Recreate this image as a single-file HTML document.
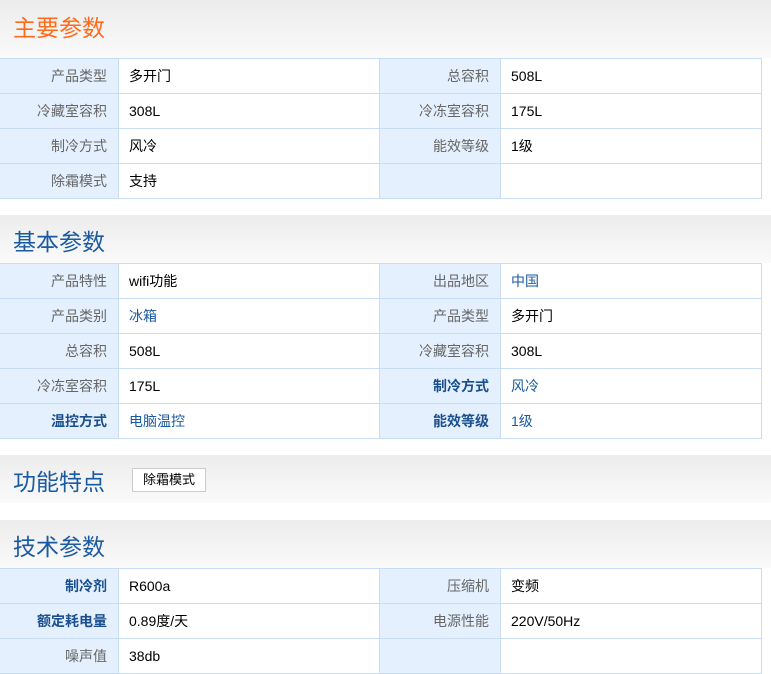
<!DOCTYPE html><html><head><meta charset="utf-8"><style>
body{margin:0;background:#fff;font-family:"Liberation Sans","Noto Sans CJK SC",sans-serif;width:771px;height:674px;overflow:hidden}
.h{height:48px;background:linear-gradient(#ececec,#fafafa);position:relative}
.h span{position:absolute;left:13px;top:8px;font-size:23px;color:#1a5aa0}
table{border-collapse:collapse;width:763px;margin-left:-1px;margin-bottom:-1px;font-size:14px}
td{border:1px solid #c8ddf5;height:34px;padding:0;}
td.l{background:#e4f0fd;color:#666;text-align:right;padding-right:11px;width:107px}
td.v{background:#fff;color:#000;padding-left:10px}
td.b{font-weight:bold;color:#1a4f8f}
td.a{color:#1a5aa0}
.g{height:17px}
</style></head><body>
<div class="h" style="height:58px"><span style="color:#ff6a1a;top:9px">主要参数</span></div>
<table>
<tr><td class="l">产品类型</td><td class="v" style="width:250px">多开门</td><td class="l" style="width:109px">总容积</td><td class="v">508L</td></tr>
<tr><td class="l">冷藏室容积</td><td class="v">308L</td><td class="l">冷冻室容积</td><td class="v">175L</td></tr>
<tr><td class="l">制冷方式</td><td class="v">风冷</td><td class="l">能效等级</td><td class="v">1级</td></tr>
<tr><td class="l">除霜模式</td><td class="v">支持</td><td class="l"></td><td class="v"></td></tr>
</table>
<div class="g"></div>
<div class="h"><span>基本参数</span></div>
<table>
<tr><td class="l">产品特性</td><td class="v" style="width:250px">wifi功能</td><td class="l" style="width:109px">出品地区</td><td class="v a">中国</td></tr>
<tr><td class="l">产品类别</td><td class="v a">冰箱</td><td class="l">产品类型</td><td class="v">多开门</td></tr>
<tr><td class="l">总容积</td><td class="v">508L</td><td class="l">冷藏室容积</td><td class="v">308L</td></tr>
<tr><td class="l">冷冻室容积</td><td class="v">175L</td><td class="l b">制冷方式</td><td class="v a">风冷</td></tr>
<tr><td class="l b">温控方式</td><td class="v a">电脑温控</td><td class="l b">能效等级</td><td class="v a">1级</td></tr>
</table>
<div class="g"></div>
<div class="h"><span>功能特点</span><div style="position:absolute;left:132px;top:13px;width:72px;height:22px;border:1px solid #ccc;background:#fff;font-size:13px;line-height:22px;text-align:center">除霜模式</div></div>
<div class="g"></div>
<div class="h"><span>技术参数</span></div>
<table>
<tr><td class="l b">制冷剂</td><td class="v" style="width:250px">R600a</td><td class="l" style="width:109px">压缩机</td><td class="v">变频</td></tr>
<tr><td class="l b">额定耗电量</td><td class="v">0.89度/天</td><td class="l">电源性能</td><td class="v">220V/50Hz</td></tr>
<tr><td class="l">噪声值</td><td class="v">38db</td><td class="l"></td><td class="v"></td></tr>
</table>
</body></html>
